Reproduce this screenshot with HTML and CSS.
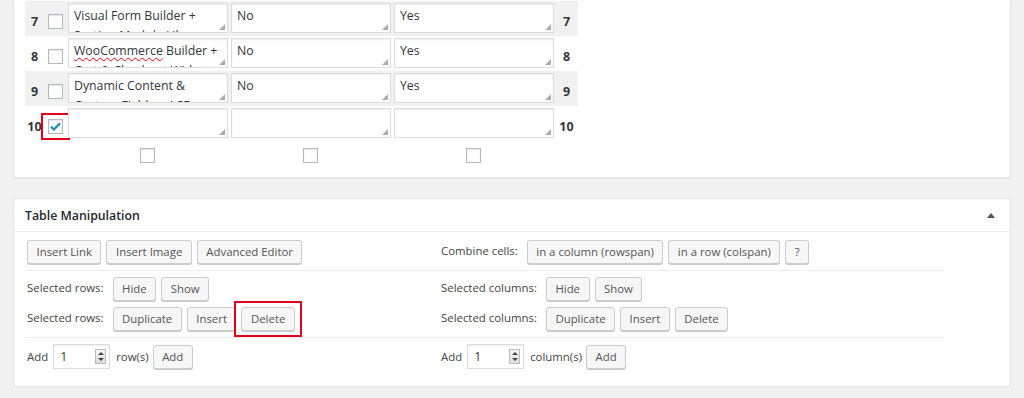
FILE: index.html
```html
<!DOCTYPE html>
<html lang="en">
<head>
  <meta charset="UTF-8" />
  <title>Edit Table</title>
  <link rel="stylesheet" href="styles.css">
</head>
<body>
  <div class="wrap">

    <!-- Table content -->
    <div class="postbox table-box">
      <div class="edit-row alt">
        <span class="row-num">7</span>
        <span class="cb-cell"><span class="check"></span></span>
        <div class="cell"><div class="cell-input">Visual Form Builder + Section Module Library</div></div>
        <div class="cell"><div class="cell-input">No</div></div>
        <div class="cell"><div class="cell-input">Yes</div></div>
        <span class="row-num">7</span>
      </div>
      <div class="edit-row">
        <span class="row-num">8</span>
        <span class="cb-cell"><span class="check"></span></span>
        <div class="cell"><div class="cell-input"><span class="misspelled">WooCommerce</span> Builder + Cart &amp; Checkout Widgets</div></div>
        <div class="cell"><div class="cell-input">No</div></div>
        <div class="cell"><div class="cell-input">Yes</div></div>
        <span class="row-num">8</span>
      </div>
      <div class="edit-row alt">
        <span class="row-num">9</span>
        <span class="cb-cell"><span class="check"></span></span>
        <div class="cell"><div class="cell-input">Dynamic Content &amp; Custom Fields + ACF Widgets</div></div>
        <div class="cell"><div class="cell-input">No</div></div>
        <div class="cell"><div class="cell-input">Yes</div></div>
        <span class="row-num">9</span>
      </div>
      <div class="edit-row">
        <span class="row-num">10</span>
        <span class="cb-cell">
          <span class="check checked flagged">
            <svg width="11" height="9" viewBox="0 0 11 9"><path d="M1 4.6l2.9 2.9L10 1.2" fill="none" stroke="#1e8cbe" stroke-width="2.2"/></svg>
          </span>
        </span>
        <div class="cell"><div class="cell-input"></div></div>
        <div class="cell"><div class="cell-input"></div></div>
        <div class="cell"><div class="cell-input"></div></div>
        <span class="row-num">10</span>
      </div>
      <div class="col-checks">
        <span></span>
        <span></span>
        <span class="check"></span>
        <span class="check"></span>
        <span class="check"></span>
        <span></span>
      </div>
    </div>

    <!-- Table Manipulation -->
    <div class="postbox manip-box">
      <div class="box-head">
        <h2>Table Manipulation</h2>
        <span class="toggle"></span>
      </div>
      <div class="box-body">
        <div class="tm-row first">
          <div class="tm-cell">
            <div class="line">
              <button class="button">Insert Link</button>
              <button class="button">Insert Image</button>
              <button class="button">Advanced Editor</button>
            </div>
          </div>
          <div class="tm-cell">
            <div class="line">
              <span class="label">Combine cells:</span>
              <button class="button">in a column (rowspan)</button>
              <button class="button">in a row (colspan)</button>
              <button class="button">?</button>
            </div>
          </div>
        </div>
        <div class="tm-row">
          <div class="tm-cell">
            <div class="line">
              <span class="label">Selected rows:</span>
              <button class="button">Hide</button>
              <button class="button">Show</button>
            </div>
            <div class="line">
              <span class="label">Selected rows:</span>
              <button class="button">Duplicate</button>
              <button class="button">Insert</button>
              <button class="button flagged">Delete</button>
            </div>
          </div>
          <div class="tm-cell">
            <div class="line">
              <span class="label">Selected columns:</span>
              <button class="button">Hide</button>
              <button class="button">Show</button>
            </div>
            <div class="line">
              <span class="label">Selected columns:</span>
              <button class="button">Duplicate</button>
              <button class="button">Insert</button>
              <button class="button">Delete</button>
            </div>
          </div>
        </div>
        <div class="tm-row">
          <div class="tm-cell">
            <div class="line add-line">
              <span>Add</span>
              <span class="num-input">1<span class="spin"><i class="up"></i><i class="down"></i></span></span>
              <span>row(s)</span>
              <button class="button">Add</button>
            </div>
          </div>
          <div class="tm-cell">
            <div class="line add-line">
              <span>Add</span>
              <span class="num-input">1<span class="spin"><i class="up"></i><i class="down"></i></span></span>
              <span>column(s)</span>
              <button class="button">Add</button>
            </div>
          </div>
        </div>
      </div>
    </div>

  </div>
</body>
</html>
```

FILE: styles.css
```css
/* Global */
* {
  box-sizing: border-box;
}
body {
  margin: 0;
  background: #f1f1f1;
  font-family: "Open Sans", "Liberation Sans", sans-serif;
  font-size: 11.4px;
  color: #444;
}
.wrap {
  width: 998px;
  margin-left: 13px;
}
.postbox {
  background: #fff;
  border: 1px solid #e5e5e5;
  box-shadow: 0 1px 1px rgba(0,0,0,0.04);
}

/* Checkboxes */
.check {
  display: inline-flex;
  align-items: center;
  justify-content: center;
  width: 15px;
  height: 15px;
  background: #fff;
  border: 1px solid #b4b9be;
  box-shadow: inset 0 1px 2px rgba(0,0,0,0.1);
}
.flagged {
  position: relative;
}
.flagged::after {
  content: "";
  position: absolute;
  top: -7px;
  left: -8px;
  right: -8px;
  bottom: -7px;
  border: 2px solid #e3001b;
}

/* Table content box */
.table-box {
  border-top: none;
  padding: 1px 11px 14px;
}
.edit-row, .col-checks {
  display: grid;
  grid-template-columns: 19px 22px 163px 163px 163px 23px;
  width: 553px;
}
.edit-row {
  height: 35px;
  align-items: center;
}
.edit-row.alt {
  background: #f1f1f1;
}
.row-num {
  padding-top: 5px;
  text-align: center;
  font-weight: 700;
  font-size: 12.5px;
  color: #32373c;
  white-space: nowrap;
}
.cb-cell {
  padding-top: 5px;
  display: flex;
  justify-content: center;
}
.cell {
  align-self: start;
  padding: 2px 1px 0 2px;
}
.cell-input {
  position: relative;
  height: 30px;
  overflow: hidden;
  padding: 2px 5px;
  background: #fff;
  border: 1px solid #ddd;
  box-shadow: inset 0 1px 2px rgba(0,0,0,0.07);
  font-size: 12.3px;
  line-height: 19.5px;
  color: #32373c;
}
.cell-input::after {
  content: "";
  position: absolute;
  right: 2px;
  bottom: 2px;
  width: 6px;
  height: 6px;
  background: radial-gradient(circle, #aaa 0.7px, transparent 1.1px) 0 0 / 2px 2px;
  clip-path: polygon(100% 0, 100% 100%, 0 100%);
}
.misspelled {
  text-decoration: underline wavy #e3001b;
  text-decoration-thickness: 1px;
  text-underline-offset: 2px;
}
.col-checks {
  margin-top: 7px;
}
.col-checks .check {
  justify-self: center;
}

/* Table Manipulation box */
.manip-box {
  margin-top: 20px;
}
.box-head {
  display: flex;
  align-items: center;
  justify-content: space-between;
  height: 33px;
  padding: 0 15px 0 11px;
  border-bottom: 1px solid #eee;
}
.box-head h2 {
  margin: 0;
  font-size: 12.3px;
  font-weight: 600;
  color: #23282d;
}
.toggle {
  width: 0;
  height: 0;
  border-left: 4px solid transparent;
  border-right: 4px solid transparent;
  border-bottom: 5px solid #555;
}
.box-body {
  padding: 0 11px 11px;
}
.tm-row {
  display: grid;
  grid-template-columns: 416px 503px;
  width: 919px;
  padding: 6px 0;
  border-bottom: 1px solid #eee;
}
.tm-row.first {
  padding-top: 8px;
}
.tm-row:last-child {
  border-bottom: none;
}
.tm-cell {
  display: flex;
  flex-direction: column;
  gap: 6px;
}
.tm-cell:first-child {
  padding-left: 2px;
}
.line {
  display: flex;
  align-items: center;
  gap: 5px;
}
.label {
  margin-right: 4px;
  padding-bottom: 4px;
}
.button {
  height: 24px;
  padding: 0 8.5px;
  font-family: inherit;
  font-size: 11.4px;
  line-height: 22px;
  color: #555;
  background: #f7f7f7;
  border: 1px solid #ccc;
  border-radius: 3px;
  box-shadow: 0 1px 0 #ccc;
  white-space: nowrap;
}

/* Add rows / columns */
.add-line {
  gap: 0;
}
.add-line .num-input {
  margin: 0 6px 0 5px;
}
.add-line .button {
  margin-left: 4px;
}
.num-input {
  display: inline-flex;
  align-items: center;
  justify-content: space-between;
  width: 57px;
  height: 25px;
  padding: 0 3px 0 6px;
  background: #fff;
  border: 1px solid #ddd;
  box-shadow: inset 0 1px 2px rgba(0,0,0,0.07);
  font-size: 12.3px;
  color: #32373c;
}
.spin {
  display: flex;
  flex-direction: column;
  align-items: center;
  justify-content: space-around;
  width: 11px;
  height: 15px;
  border: 1px solid #bbb;
  background: linear-gradient(#f6f6f6, #dcdcdc);
}
.spin i {
  width: 0;
  height: 0;
  border-left: 3px solid transparent;
  border-right: 3px solid transparent;
}
.spin .up {
  border-bottom: 3px solid #444;
}
.spin .down {
  border-top: 3px solid #444;
}
```
